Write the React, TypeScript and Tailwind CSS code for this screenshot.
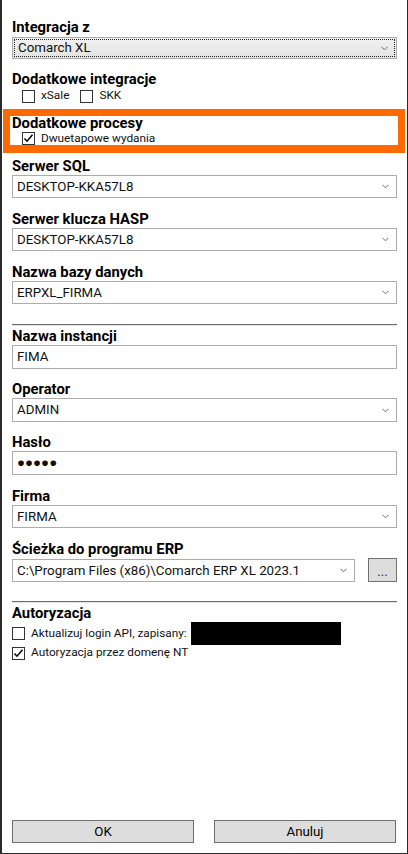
import React from 'react';

const font = "font-['Segoe_UI',Roboto,sans-serif]";

function Chevron() {
  return (
    <svg width="7" height="5" viewBox="0 0 7 5" className="shrink-0">
      <path d="M0.5 0.8 L3.5 3.8 L6.5 0.8" fill="none" stroke="#6a6a6a" strokeWidth="1" />
    </svg>
  );
}

function Label({ children, mt }: { children: React.ReactNode; mt: string }) {
  return (
    <div className={`${mt} h-[17px] leading-[17px] text-[14.8px] font-bold text-black whitespace-nowrap`}>
      {children}
    </div>
  );
}

function Combo({ value, h = 'h-[23px]' }: { value: string; h?: string }) {
  return (
    <div className={`${h} flex items-center justify-between border border-[#acacac] bg-white pl-[4px] pr-[7px]`}>
      <span className="text-[13.3px] text-[#111] whitespace-nowrap">{value}</span>
      <Chevron />
    </div>
  );
}

function TextBox({ value }: { value: string }) {
  return (
    <div className="h-[24px] flex items-center border border-[#acacac] bg-white pl-[4px]">
      <span className="text-[13.3px] text-[#111] whitespace-nowrap">{value}</span>
    </div>
  );
}

function Check({ checked }: { checked?: boolean }) {
  return (
    <div className="w-[13px] h-[13px] border border-[#333] bg-white shrink-0 flex items-center justify-center">
      {checked && (
        <svg width="11" height="11" viewBox="0 0 11 11">
          <path d="M1.5 5.5 L4 8.2 L9.5 1.8" fill="none" stroke="#000" strokeWidth="1.5" />
        </svg>
      )}
    </div>
  );
}

function Separator({ mt }: { mt: string }) {
  return (
    <div className={`${mt} h-[2px] border-t border-[#6d6d6d] bg-[#e3e3e3]`} />
  );
}

export default function App() {
  return (
    <div className={`w-[408px] h-[854px] bg-white border-l-2 border-r border-b border-[#2b2b2b] ${font} flex flex-col pl-[10px] pr-[10px]`}>
      {/* Integracja */}
      <Label mt="mt-[19px]">Integracja z</Label>
      <div className="mt-[1px] h-[22px] border border-[#acacac] bg-gradient-to-b from-[#f2f2f2] to-[#e3e3e3] p-[1px]">
        <div className="h-full flex items-center justify-between border border-dotted border-[#222] pl-[3px] pr-[6px]">
          <span className="text-[13.3px] text-[#111]">Comarch XL</span>
          <Chevron />
        </div>
      </div>

      <Label mt="mt-[12px]">Dodatkowe integracje</Label>
      <div className="h-[16px] flex items-center pl-[10px] text-[11.8px] text-[#111]">
        <Check />
        <span className="ml-[6px]">xSale</span>
        <div className="ml-[11px]"><Check /></div>
        <span className="ml-[6px]">SKK</span>
      </div>

      {/* highlighted */}
      <div className="mt-[5px] -ml-[9px] -mr-[8px] border-x-[7px] border-t-[7px] border-b-[8px] border-[#ff6a00] bg-white pl-[2px]">
        <div className="h-[15px] leading-[15px] text-[14.8px] font-bold text-black">Dodatkowe procesy</div>
        <div className="h-[14px] flex items-center pl-[10px] text-[11.8px] text-[#111]">
          <Check checked />
          <span className="ml-[6px] leading-[14px]">Dwuetapowe wydania</span>
        </div>
      </div>

      <Label mt="mt-[5px]">Serwer SQL</Label>
      <Combo value="DESKTOP-KKA57L8" />

      <Label mt="mt-[13px]">Serwer klucza HASP</Label>
      <Combo value="DESKTOP-KKA57L8" />

      <Label mt="mt-[13px]">Nazwa bazy danych</Label>
      <Combo value="ERPXL_FIRMA" />

      <Separator mt="mt-[20px]" />

      <Label mt="mt-[2px]">Nazwa instancji</Label>
      <TextBox value="FIMA" />

      <Label mt="mt-[12px]">Operator</Label>
      <Combo value="ADMIN" h="h-[24px]" />

      <Label mt="mt-[12px]">Hasło</Label>
      <TextBox value="●●●●●" />

      <Label mt="mt-[13px]">Firma</Label>
      <Combo value="FIRMA" />

      <Label mt="mt-[13px]">Ścieżka do programu ERP</Label>
      <div className="flex items-start gap-[13px]">
        <div className="flex-1 mt-[1px]">
          <Combo value="C:\Program Files (x86)\Comarch ERP XL 2023.1" />
        </div>
        <button className="w-[29px] h-[24px] border border-[#707070] bg-[#dddddd] text-[13px] leading-[26px] text-[#1a2a6a]">
          ...
        </button>
      </div>

      <Separator mt="mt-[19px]" />

      <Label mt="mt-[2px]">Autoryzacja</Label>
      <div className="h-[23px] flex items-center text-[11.8px] text-[#111]">
        <Check />
        <span className="ml-[6px] whitespace-nowrap">Aktualizuj login API, zapisany:</span>
        <div className="ml-[4px] w-[150px] h-[23px] bg-black" />
      </div>
      <div className="h-[16px] flex items-center text-[11.8px] text-[#111]">
        <Check checked />
        <span className="ml-[6px] whitespace-nowrap">Autoryzacja przez domenę NT</span>
      </div>

      <div className="mt-auto mb-[10px] flex gap-[20px] pr-[1px]">
        <button className="flex-1 h-[23px] border border-[#707070] bg-[#dddddd] text-[13.3px] text-black">OK</button>
        <button className="flex-1 h-[23px] border border-[#707070] bg-[#dddddd] text-[13.3px] text-black">Anuluj</button>
      </div>
    </div>
  );
}
